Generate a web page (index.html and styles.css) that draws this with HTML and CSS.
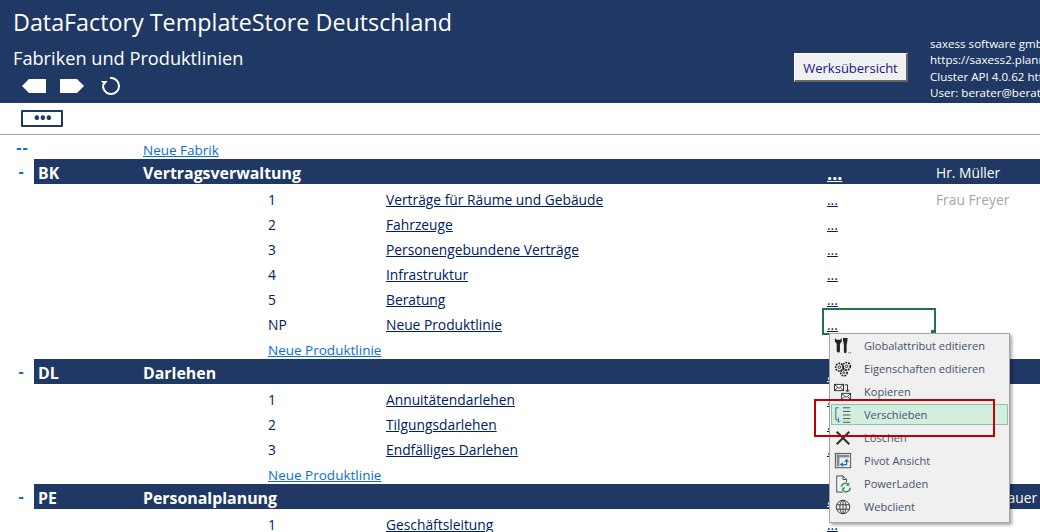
FILE: index.html
```html
<!DOCTYPE html>
<html lang="de">

<head>
   <meta charset="UTF-8">
   <title>DataFactory TemplateStore</title>
   <link rel="stylesheet" href="styles.css">
</head>

<body>
   <header class="top">
      <div class="top-left">
         <h1>DataFactory TemplateStore Deutschland</h1>
         <h2>Fabriken und Produktlinien</h2>
         <div class="nav-icons">
            <svg width="24" height="14" viewBox="0 0 24 14"><path d="M0 7 7 0H24V14H7Z" fill="#fff"/></svg>
            <svg width="24" height="14" viewBox="0 0 24 14"><path d="M0 0H17L24 7 17 14H0Z" fill="#fff"/></svg>
            <svg class="reload" width="20" height="20" viewBox="0 0 20 20"><path d="M9 2.100A8 8 0 1 1 2.300 8" fill="none" stroke="#fff" stroke-width="2"/><path d="M0 5H6.500L3.500 9Z" fill="#fff"/></svg>
         </div>
      </div>
      <button class="werk-btn">Werksübersicht</button>
      <div class="info">
         <p>saxess software gmbh</p>
         <p>https://saxess2.planning-cloud.de</p>
         <p>Cluster API 4.0.62 https://api.saxess</p>
         <p>User: berater@berater.de</p>
      </div>
   </header>

   <div class="toolbar">
      <div class="more-btn">•••</div>
   </div>

   <div class="row first">
      <span class="dash">--</span>
      <span></span>
      <a class="new" href="#">Neue Fabrik</a>
   </div>

   <div class="row band">
      <span class="dash">-</span>
      <span class="code">BK</span>
      <span class="title">Vertragsverwaltung</span>
      <span></span>
      <span></span>
      <a href="#" class="dots">...</a>
      <span class="person">Hr. Müller</span>
   </div>
   <div class="row"><i></i><i></i><i></i><span class="num">1</span><a href="#">Verträge für Räume und Gebäude</a><a href="#" class="dots">...</a><span class="person grey">Frau Freyer</span></div>
   <div class="row"><i></i><i></i><i></i><span class="num">2</span><a href="#">Fahrzeuge</a><a href="#" class="dots">...</a></div>
   <div class="row"><i></i><i></i><i></i><span class="num">3</span><a href="#">Personengebundene Verträge</a><a href="#" class="dots">...</a></div>
   <div class="row"><i></i><i></i><i></i><span class="num">4</span><a href="#">Infrastruktur</a><a href="#" class="dots">...</a></div>
   <div class="row"><i></i><i></i><i></i><span class="num">5</span><a href="#">Beratung</a><a href="#" class="dots">...</a></div>
   <div class="row"><i></i><i></i><i></i><span class="num">NP</span><a href="#">Neue Produktlinie</a><a href="#" class="dots">...</a></div>
   <div class="row"><i></i><i></i><i></i><a class="new wide" href="#">Neue Produktlinie</a></div>

   <div class="row band">
      <span class="dash">-</span>
      <span class="code">DL</span>
      <span class="title">Darlehen</span>
      <span></span>
      <span></span>
      <a href="#" class="dots">...</a>
   </div>
   <div class="row"><i></i><i></i><i></i><span class="num">1</span><a href="#">Annuitätendarlehen</a><a href="#" class="dots">...</a></div>
   <div class="row"><i></i><i></i><i></i><span class="num">2</span><a href="#">Tilgungsdarlehen</a><a href="#" class="dots">...</a></div>
   <div class="row"><i></i><i></i><i></i><span class="num">3</span><a href="#">Endfälliges Darlehen</a><a href="#" class="dots">...</a></div>
   <div class="row"><i></i><i></i><i></i><a class="new wide" href="#">Neue Produktlinie</a></div>

   <div class="row band">
      <span class="dash">-</span>
      <span class="code">PE</span>
      <span class="title">Personalplanung</span>
      <span></span>
      <span></span>
      <a href="#" class="dots">...</a>
      <span class="person">Frau Ines Bauer</span>
   </div>
   <div class="row"><i></i><i></i><i></i><span class="num">1</span><a href="#">Geschäftsleitung</a><a href="#" class="dots">...</a></div>

   <div class="cell-select"></div>

   <ul class="menu">
      <li>
         <svg viewBox="0 0 20 20"><path d="M1 1V5L3 7.500V15.500A1.800 1.800 0 0 0 6.600 15.500V7.500L8.600 5V1L6.800 3H2.800Z" fill="#222"/><path d="M10 1H15V3.500L14 9V16.500A1.500 1.500 0 0 1 11 16.500V9L10 3.500Z" fill="#222"/><path d="M16 17h1v1h-1zM18 17h1v1h-1z" fill="#444"/></svg>
         Globalattribut editieren
      </li>
      <li>
         <svg viewBox="0 0 20 20" fill="none" stroke="#222"><circle cx="6" cy="8" r="4.200" stroke-width="1.800" stroke-dasharray="2 1"/><circle cx="6" cy="8" r="1.400"/><circle cx="14" cy="7" r="4.200" stroke-width="1.800" stroke-dasharray="2 1"/><circle cx="14" cy="7" r="1.400"/><circle cx="11" cy="14" r="3.600" stroke-width="1.800" stroke-dasharray="2 1"/><circle cx="11" cy="14" r="1"/></svg>
         Eigenschaften editieren
      </li>
      <li>
         <svg viewBox="0 0 20 20" fill="none" stroke="#222"><rect x="0.500" y="1.500" width="10" height="7" fill="#fff"/><path d="M1 2 5.500 6 10 2M1 8 4 5M10 8 7 5"/><rect x="8.500" y="11.500" width="10" height="7" fill="#fff"/><path d="M9 12 13.500 16 18 12M9 18 12 15M18 18 15 15"/><path d="M12 2H15V9M13 7.500 15 10 17 7.500"/></svg>
         Kopieren
      </li>
      <li class="active">
         <svg viewBox="0 0 20 20" fill="none"><path d="M5 2H2V15H4" stroke="#1f5f8f"/><path d="M5 13V18M3 16 5 18 7 16" stroke="#2b7cc0"/><path d="M10 2H18M10 6H18M10 10H18M10 14H18M10 18H18" stroke="#444"/></svg>
         Verschieben
      </li>
      <li>
         <svg viewBox="0 0 20 20"><path d="M3 3 17 17M17 3 3 17" stroke="#333" stroke-width="2.400"/></svg>
         Löschen
      </li>
      <li>
         <svg viewBox="0 0 20 20" fill="none"><rect x="1.500" y="1.500" width="17" height="16" stroke="#444"/><rect x="3" y="3" width="14" height="3" fill="#888"/><rect x="3" y="3" width="3" height="13" fill="#888"/><path d="M8 14H14V9M12 11 14 8.500 16 11M10 12 7.500 14 10 16" stroke="#1c6fb8" stroke-width="1.300"/></svg>
         Pivot Ansicht
      </li>
      <li>
         <svg viewBox="0 0 20 20" fill="none"><path d="M10 19H3V1H10L14 5V8M10 1V5H14" stroke="#444"/><path d="M8 13A4.500 4.500 0 0 1 16 11M18 14A4.500 4.500 0 0 1 10 17" stroke="#3c9a6a" stroke-width="1.800"/><path d="M17 8V12H13ZM9 18V14H13Z" fill="#3c9a6a"/></svg>
         PowerLaden
      </li>
      <li>
         <svg viewBox="0 0 20 20" fill="none" stroke="#333"><circle cx="10" cy="10" r="7.500"/><ellipse cx="10" cy="10" rx="3.500" ry="7.500"/><path d="M10 2.500V17.500M3 7.500H17M3 12.500H17"/></svg>
         Webclient
      </li>
   </ul>

   <div class="red-box"></div>
</body>

</html>
```
FILE: styles.css
```css
* {
   margin: 0;
   padding: 0;
   box-sizing: border-box;
}

html,
body {
   width: 1040px;
   height: 532px;
   overflow: hidden;
}

body {
   position: relative;
   background-color: white;
   font-family: "Open Sans", "Noto Sans", sans-serif;
   font-size: 13.800px;
   color: #002060;
}

.top {
   height: 103px;
   background-color: #203864;
   color: white;
   display: flex;
   align-items: flex-start;
}

.top-left {
   width: 794px;
   flex-shrink: 0;
   padding: 7px 0 0 13px;
}

h1 {
   font-size: 23.300px;
   font-weight: 400;
   line-height: 30px;
}

h2 {
   font-size: 18.200px;
   font-weight: 400;
   line-height: 24px;
   margin-top: 9px;
}

.nav-icons {
   display: flex;
   align-items: center;
   gap: 14px;
   margin: 6px 0 0 9px;
}

.reload {
   margin-left: 3px;
}

.werk-btn {
   width: 114px;
   height: 29px;
   margin-top: 53px;
   padding-top: 1px;
   background-color: #f0f0f0;
   border: 1px solid;
   border-color: #fff #666 #666 #fff;
   border-width: 1px 2px 2px 1px;
   font-family: inherit;
   font-size: 13px;
   color: #14148c;
   flex-shrink: 0;
}

.info {
   margin: 36px 0 0 22px;
   white-space: nowrap;
   font-size: 11.600px;
   line-height: 16.300px;
}

.toolbar {
   height: 32px;
   border-bottom: 1px solid #a6a6a6;
   padding: 7px 0 0 21px;
}

.more-btn {
   width: 42px;
   height: 17px;
   border: 2px solid #203864;
   border-radius: 1px;
   color: #203864;
   font-size: 20px;
   line-height: 12px;
   text-align: center;
   letter-spacing: -1.500px;
}

.row {
   display: grid;
   grid-template-columns: 34px 109px 125px 118px 441px 109px 1fr;
   height: 25px;
   align-items: end;
   white-space: nowrap;
   line-height: 19px;
}

.row.first {
   height: 24px;
}

.row a {
   color: #002060;
}

.dash {
   color: #0a6ed1;
   font-size: 16px;
   font-weight: 700;
   line-height: 17px;
   text-align: center;
   padding: 0 0 4px 11px;
   letter-spacing: 1px;
}

.first .dash {
   padding-bottom: 3px;
}

.band {
   background: linear-gradient(to right, white 34px, #203864 34px);
   color: white;
   align-items: center;
   padding-top: 2px;
   line-height: 17px;
}

.band .code,
.band .title {
   font-weight: 700;
   font-size: 15.900px;
   line-height: 20px;
}

.band .code {
   padding-left: 4px;
}

.band .dash {
   padding: 0 0 2px 9px;
}

.row.band .dots {
   color: white;
   font-size: 18px;
   font-weight: 700;
   line-height: 20px;
}

.person {
   color: white;
}

.person.grey {
   color: #a6a6a6;
}

.row a.new {
   color: #0a6ed1;
   font-size: 13.500px;
   line-height: 17px;
}

.wide {
   grid-column: span 2;
}

.cell-select {
   position: absolute;
   left: 822px;
   top: 308px;
   width: 114px;
   height: 27px;
   border: 2px solid #217346;
}

.cell-select::after {
   content: "";
   position: absolute;
   right: -2px;
   bottom: -2px;
   width: 5px;
   height: 5px;
   background-color: #217346;
}

.menu {
   position: absolute;
   left: 829px;
   top: 333px;
   width: 181px;
   height: 190px;
   list-style: none;
   background-color: #f0f0f0;
   border: 1px solid #a6a6a6;
   box-shadow: 2px 2px 3px rgba(0, 0, 0, 0.35);
   font-size: 11.050px;
   color: #44546a;
}

.menu li {
   display: flex;
   align-items: center;
   gap: 12px;
   height: 23px;
   margin: 0 1px;
   padding-left: 3px;
   white-space: nowrap;
}

.menu svg {
   width: 18px;
   height: 18px;
}

.menu .active {
   height: 21px;
   margin: 1px;
   background-color: #d3eddf;
   outline: 1px solid #8cc5a3;
   outline-offset: -1px;
}

.red-box {
   position: absolute;
   left: 814px;
   top: 399px;
   width: 181px;
   height: 38px;
   border: 2px solid #c00000;
}
```
